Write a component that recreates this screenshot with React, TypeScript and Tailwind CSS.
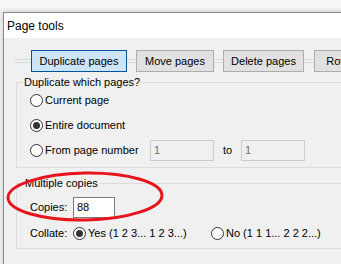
import React from 'react';

const font = { fontFamily: '"Segoe UI", "Liberation Sans", Arial, sans-serif' };

function Radio({ checked }: { checked?: boolean }) {
  return (
    <span className="flex h-[13px] w-[13px] shrink-0 items-center justify-center rounded-full border border-[#333] bg-white">
      {checked && <span className="h-[7px] w-[7px] rounded-full bg-[#333]" />}
    </span>
  );
}

function Tab({ label, active, w }: { label: string; active?: boolean; w: string }) {
  return (
    <div
      className={`flex h-[22px] shrink-0 items-center justify-center border ${w} ${
        active ? 'border-[#005499] bg-[#cce4f7]' : 'border-[#adadad] bg-[#e1e1e1]'
      }`}
    >
      {label}
    </div>
  );
}

function Link({ w }: { w: string }) {
  return <div className={`h-[4px] shrink-0 border-y border-[#dadada] ${w}`} />;
}

export default function App() {
  return (
    <div className="relative h-[264px] w-[341px] overflow-hidden bg-[#f7f7f7] text-[11px] text-black" style={font}>
      <div className="ml-[3px] mt-[12px] w-[420px] border-l border-t border-[#8a8a8a] shadow-[-2px_-2px_4px_rgba(0,0,0,0.12)]">
        <div className="flex h-[25px] items-center bg-white pl-[3px] text-[12px]">Page tools</div>
        <div className="h-[240px] bg-[#f0f0f0] pt-[12px]">
          <div className="flex items-center pl-[11px]">
            <Link w="w-[16px]" />
            <Tab label="Duplicate pages" active w="w-[96px]" />
            <Link w="w-[9px]" />
            <Tab label="Move pages" w="w-[78px]" />
            <Link w="w-[9px]" />
            <Tab label="Delete pages" w="w-[81px]" />
            <Link w="w-[10px]" />
            <Tab label="Rotate pages" w="w-[90px]" />
          </div>

          <fieldset className="ml-[12px] mt-[3px] h-[93px] w-[380px] border border-[#dcdcdc]">
            <legend className="ml-[6px] px-[1px] leading-[14px]">Duplicate which pages?</legend>
            <div className="flex flex-col gap-[12px] pl-[13px] pt-[5px]">
              <div className="flex h-[13px] items-center gap-[2px]">
                <Radio />
                <span>Current page</span>
              </div>
              <div className="flex h-[13px] items-center gap-[2px]">
                <Radio checked />
                <span>Entire document</span>
              </div>
              <div className="flex h-[13px] items-center gap-[2px]">
                <Radio />
                <span className="w-[103px]">From page number</span>
                <div className="flex h-[21px] w-[64px] items-center border border-[#cccccc] bg-[#f0f0f0] pl-[3px] text-[#6d6d6d]">1</div>
                <span className="w-[23px] pl-[7px]">to</span>
                <div className="flex h-[21px] w-[64px] items-center border border-[#cccccc] bg-[#f0f0f0] pl-[3px] text-[#6d6d6d]">1</div>
              </div>
            </div>
          </fieldset>

          <fieldset className="ml-[12px] mt-[8px] h-[73px] w-[380px] border border-[#dcdcdc]">
            <legend className="ml-[7px] px-[1px] leading-[14px]">Multiple copies</legend>
            <div className="flex flex-col gap-[9px] pl-[13px] pt-[7px]">
              <div className="flex items-center">
                <span className="w-[43px]">Copies:</span>
                <div className="flex h-[21px] w-[42px] items-center border border-[#7a7a7a] bg-white pl-[3px]">88</div>
              </div>
              <div className="flex h-[13px] items-center">
                <span className="w-[43px]">Collate:</span>
                <Radio checked />
                <span className="ml-[2px] w-[123px]">Yes (1 2 3... 1 2 3...)</span>
                <Radio />
                <span className="ml-[2px]">No (1 1 1... 2 2 2...)</span>
              </div>
            </div>
          </fieldset>
        </div>
      </div>

      <svg className="pointer-events-none absolute left-0 top-0" width="341" height="264" viewBox="0 0 341 264">
        <ellipse cx="85" cy="196.5" rx="77" ry="23.5" fill="none" stroke="#e8141c" strokeWidth="3" transform="rotate(-1 85 196.5)" />
      </svg>
    </div>
  );
}
